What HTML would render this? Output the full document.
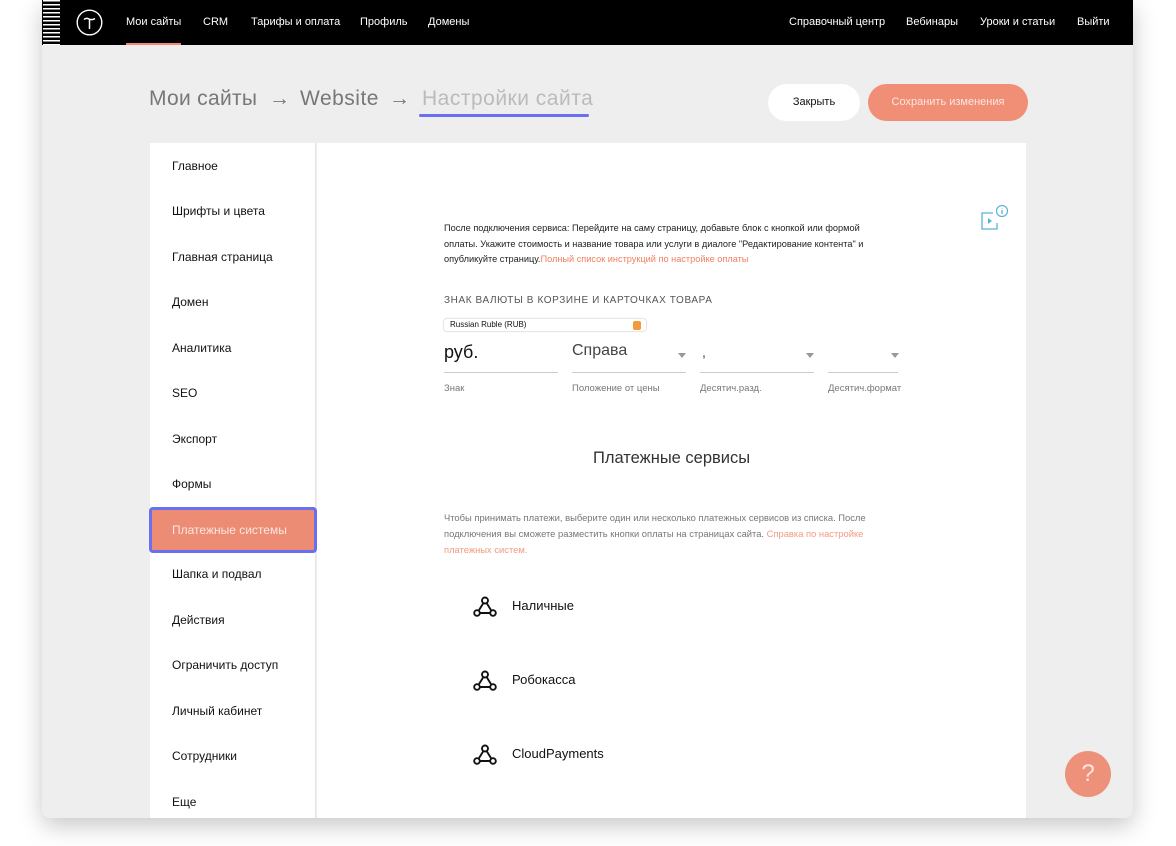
<!DOCTYPE html>
<html><head><meta charset="utf-8"><style>
*{margin:0;padding:0;box-sizing:border-box}
body{width:1176px;height:846px;background:#fff;position:relative;overflow:hidden;font-family:"Liberation Sans","Noto Sans CJK SC",sans-serif;color:#000}
.win{position:absolute;left:42px;top:0;width:1091px;height:818px;background:#eeeeee;border-radius:0 0 8px 8px;box-shadow:0 8px 24px rgba(0,0,0,.22);overflow:hidden}
.nav{position:absolute;left:0;top:0;width:1091px;height:45px;background:#000}
.strip{position:absolute;left:1px;top:0;width:17px;height:45px;background:repeating-linear-gradient(180deg,#fff 0 1.5px,#000 1.5px 4px)}
.a{position:absolute;font-size:11px;color:#fff;top:16px;white-space:nowrap}
.abs{position:absolute;white-space:nowrap}
.bc{position:absolute;top:87px;font-size:21px;color:#777;white-space:nowrap}
.side{position:absolute;left:108px;top:143px;width:166px;height:680px;background:#fff;border-right:1px solid #e6e6e6}
.side div{position:absolute;left:22px;font-size:12px;color:#111}
.main{position:absolute;left:275px;top:143px;width:709px;height:680px;background:#fff}
.ul{position:absolute;border-bottom:1px solid #ccc}
.lbl{position:absolute;font-size:9.5px;color:#777}
.tri{position:absolute;width:0;height:0;border-left:4px solid transparent;border-right:4px solid transparent;border-top:5px solid #999}
.ps{position:absolute;font-size:13px;color:#111}
</style></head><body>
<div class="win">
<div class="nav">
<div class="strip"></div>
<svg class="abs" style="left:34px;top:9px" width="27" height="27" viewBox="0 0 27 27"><circle cx="13.5" cy="13.5" r="12.3" fill="none" stroke="#fff" stroke-width="1.4"/><path d="M8 10.5 Q10 8.5 13 10 Q16 11.5 19 9.5 M13.5 10.5 V20" fill="none" stroke="#fff" stroke-width="1.5"/></svg>
<div class="a" style="left:84px">Мои сайты</div>
<div class="abs" style="left:84px;top:43px;width:55px;height:2px;background:#f4876e"></div>
<div class="a" style="left:161px">CRM</div>
<div class="a" style="left:209px">Тарифы и оплата</div>
<div class="a" style="left:318px">Профиль</div>
<div class="a" style="left:386px">Домены</div>
<div class="a" style="left:747px">Справочный центр</div>
<div class="a" style="left:864px">Вебинары</div>
<div class="a" style="left:938px">Уроки и статьи</div>
<div class="a" style="left:1035px">Выйти</div>
</div>
<div class="bc" style="left:107px;letter-spacing:0.3px">Мои сайты</div>
<div class="bc" style="left:227px">→</div>
<div class="bc" style="left:258px;letter-spacing:0.5px">Website</div>
<div class="bc" style="left:347px">→</div>
<div class="bc" style="left:380px;color:#bbb;letter-spacing:0.5px">Настройки сайта</div>
<div class="abs" style="left:377px;top:114px;width:170px;height:3px;background:#6a6ff0;border-radius:2px"></div>
<div class="abs" style="left:726px;top:84px;width:92px;height:37px;background:#fff;border-radius:19px;font-size:11px;text-align:center;line-height:37px;color:#111">Закрыть</div>
<div class="abs" style="left:826px;top:84px;width:160px;height:37px;background:#f08f76;border-radius:19px;font-size:11px;text-align:center;line-height:37px;color:#fde6df">Сохранить изменения</div>
<div class="side">
<div style="top:16px">Главное</div>
<div style="top:61px">Шрифты и цвета</div>
<div style="top:107px">Главная страница</div>
<div style="top:152px">Домен</div>
<div style="top:198px">Аналитика</div>
<div style="top:243px">SEO</div>
<div style="top:289px">Экспорт</div>
<div style="top:334px">Формы</div>
<div style="top:424px">Шапка и подвал</div>
<div style="top:470px">Действия</div>
<div style="top:515px">Ограничить доступ</div>
<div style="top:561px">Личный кабинет</div>
<div style="top:606px">Сотрудники</div>
<div style="top:652px">Еще</div>
</div>
<div class="abs" style="left:107px;top:507px;width:168px;height:46px;background:#ec8c74;border:3px solid #6a6ff0;border-radius:4px;color:#fde6df;font-size:12px;padding:13px 0 0 20px">Платежные системы</div>
<div class="main">
<svg class="abs" style="left:662px;top:62px" width="30" height="28" viewBox="0 0 30 28"><path d="M14 8 H3 V24 H18 V18" fill="none" stroke="#5ab3d6" stroke-width="1.3"/><path d="M9 13 L13 16 L9 19 Z" fill="#5ab3d6"/><circle cx="23" cy="6" r="5.5" fill="#fff" stroke="#5ab3d6" stroke-width="1.2"/><path d="M23 5 V9 M23 3 V3.5" stroke="#5ab3d6" stroke-width="1.3"/></svg>
<div class="abs" style="left:127px;top:78px;font-size:9.2px;line-height:15.5px;color:#222;white-space:normal;width:440px">После подключения сервиса: Перейдите на саму страницу, добавьте блок с кнопкой или формой оплаты. Укажите стоимость и название товара или услуги в диалоге "Редактирование контента" и опубликуйте страницу.<span style="color:#f08060">Полный список инструкций по настройке оплаты</span></div>
<div class="abs" style="left:127px;top:152px;font-size:10px;letter-spacing:.6px;color:#555">ЗНАК ВАЛЮТЫ В КОРЗИНЕ И КАРТОЧКАХ ТОВАРА</div>
<div class="abs" style="left:127px;top:176px;width:202px;height:12px;background:#fff;border-radius:3px;box-shadow:0 0 1px 1px #e3e3e3;font-size:8px;padding:1px 0 0 6px;color:#111">Russian Ruble (RUB)</div>
<div class="abs" style="left:316px;top:178px;width:8px;height:9px;background:#f29a3c;border-radius:2px"></div>
<div class="abs" style="left:127px;top:199px;font-size:18px;color:#111">руб.</div>
<div class="abs" style="left:255px;top:199px;font-size:16px;color:#444">Справа</div>
<div class="abs" style="left:385px;top:201px;font-size:14px;color:#444">,</div>
<div class="tri" style="left:361px;top:210px"></div>
<div class="tri" style="left:489px;top:210px"></div>
<div class="tri" style="left:574px;top:210px"></div>
<div class="ul" style="left:127px;top:229px;width:114px"></div>
<div class="ul" style="left:255px;top:229px;width:114px"></div>
<div class="ul" style="left:383px;top:229px;width:114px"></div>
<div class="ul" style="left:511px;top:229px;width:70px"></div>
<div class="lbl" style="left:127px;top:240px">Знак</div>
<div class="lbl" style="left:255px;top:240px">Положение от цены</div>
<div class="lbl" style="left:383px;top:240px">Десятич.разд.</div>
<div class="lbl" style="left:511px;top:240px">Десятич.формат</div>
<div class="abs" style="left:276px;top:306px;font-size:16.5px;color:#333">Платежные сервисы</div>
<div class="abs" style="left:127px;top:367px;font-size:9.4px;line-height:16px;color:#777;white-space:normal;width:440px">Чтобы принимать платежи, выберите один или несколько платежных сервисов из списка. После подключения вы сможете разместить кнопки оплаты на страницах сайта. <span style="color:#f29a80">Справка по настройке платежных систем.</span></div>
<svg class="abs" style="left:156px;top:453px" width="24" height="22" viewBox="0 0 24 22"><g fill="none" stroke="#111" stroke-width="1.9"><circle cx="12" cy="4.5" r="3"/><circle cx="4" cy="17" r="2.8"/><circle cx="20" cy="17" r="2.8"/><path d="M10.4 7 L5.6 14.7 M13.6 7 L18.4 14.7 M6.8 17 H17.2"/></g></svg>
<div class="ps" style="left:195px;top:455px">Наличные</div>
<svg class="abs" style="left:156px;top:527px" width="24" height="22" viewBox="0 0 24 22"><g fill="none" stroke="#111" stroke-width="1.9"><circle cx="12" cy="4.5" r="3"/><circle cx="4" cy="17" r="2.8"/><circle cx="20" cy="17" r="2.8"/><path d="M10.4 7 L5.6 14.7 M13.6 7 L18.4 14.7 M6.8 17 H17.2"/></g></svg>
<div class="ps" style="left:195px;top:529px">Робокасса</div>
<svg class="abs" style="left:156px;top:601px" width="24" height="22" viewBox="0 0 24 22"><g fill="none" stroke="#111" stroke-width="1.9"><circle cx="12" cy="4.5" r="3"/><circle cx="4" cy="17" r="2.8"/><circle cx="20" cy="17" r="2.8"/><path d="M10.4 7 L5.6 14.7 M13.6 7 L18.4 14.7 M6.8 17 H17.2"/></g></svg>
<div class="ps" style="left:195px;top:603px">CloudPayments</div>
</div>
<div class="abs" style="left:1023px;top:751px;width:46px;height:46px;border-radius:50%;background:#ee917a;color:#fde6df;font-size:24px;text-align:center;line-height:46px">?</div>
</div>
</body></html>
